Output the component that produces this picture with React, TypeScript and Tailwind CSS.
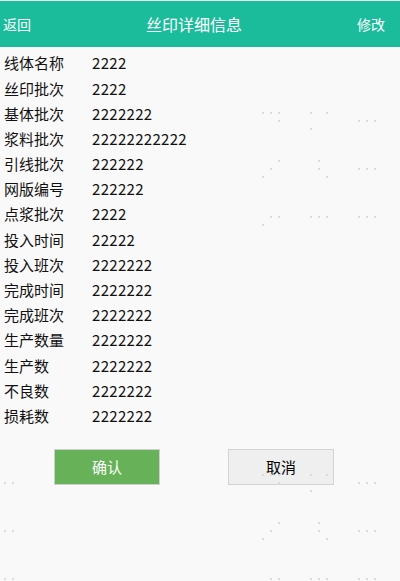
const rows: [string, string][] = [
  ["线体名称", "2222"],
  ["丝印批次", "2222"],
  ["基体批次", "2222222"],
  ["浆料批次", "22222222222"],
  ["引线批次", "222222"],
  ["网版编号", "222222"],
  ["点浆批次", "2222"],
  ["投入时间", "22222"],
  ["投入班次", "2222222"],
  ["完成时间", "2222222"],
  ["完成班次", "2222222"],
  ["生产数量", "2222222"],
  ["生产数", "2222222"],
  ["不良数", "2222222"],
  ["损耗数", "2222222"],
];

// faint watermark dots, offsets inside one cluster
const cluster: [number, number[]][] = [
  [0, [262, 270, 278, 310, 326]],
  [8, [278, 358, 366, 374]],
  [16, [310]],
  [48, [278, 318]],
  [56, [270, 318, 358, 366, 374]],
  [64, [262, 326]],
  [104, [270, 278, 310, 318, 326, 358, 366, 374]],
  [112, [262]],
];

function Watermark() {
  const dots: { x: number; y: number }[] = [];
  [112, 474].forEach((base, i) => {
    cluster.forEach(([dy, xs]) => {
      xs.forEach((x) => dots.push({ x, y: base + dy }));
    });
    if (i === 1) {
      [8, 56, 104].forEach((dy) => {
        dots.push({ x: 4, y: base + dy });
        dots.push({ x: 12, y: base + dy });
      });
    }
  });
  return (
    <svg
      className="pointer-events-none absolute left-0 top-0"
      width="400"
      height="581"
    >
      {dots.map((d, i) => (
        <rect key={i} x={d.x} y={d.y} width="2" height="2" fill="#dcdcdc" />
      ))}
    </svg>
  );
}

export default function App() {
  return (
    <div
      className="relative min-h-[581px] w-[400px] overflow-hidden bg-[#f9f9f9] text-[#111]"
      style={{ fontFamily: '"Noto Sans CJK SC", "Noto Sans", sans-serif' }}
    >
      <div className="h-px bg-[#e8e8e8]" />
      <header className="flex h-[46px] items-center justify-between bg-[#1bbc9b] pl-[3px] pr-[15px] text-white">
        <span className="text-[14px]">返回</span>
        <span className="text-[16px]">丝印详细信息</span>
        <span className="text-[14px]">修改</span>
      </header>

      <div className="pt-[4px] pl-[4px]">
        {rows.map(([label, value]) => (
          <div key={label} className="flex h-[25.2px] items-center text-[15px]">
            <span className="w-[88px] shrink-0">{label}</span>
            <span className="tracking-[0.3px]">{value}</span>
          </div>
        ))}
      </div>

      <div className="mt-[20px] flex gap-[68px] pl-[54px]">
        <button className="h-[36px] w-[106px] border border-[#cfcfcf] bg-[#67b158] text-[15px] text-white">
          确认
        </button>
        <button className="h-[36px] w-[106px] border border-[#d3d3d3] bg-[#efefef] text-[15px] text-black">
          取消
        </button>
      </div>

      <Watermark />
    </div>
  );
}
